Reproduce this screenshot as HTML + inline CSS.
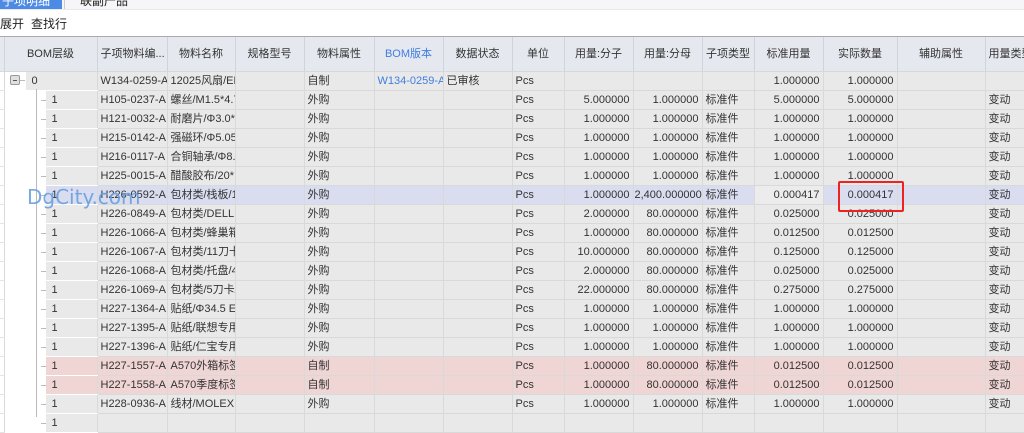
<!DOCTYPE html>
<html><head><meta charset="utf-8"><style>
*{margin:0;padding:0;box-sizing:border-box}
body{width:1024px;height:417px;overflow:hidden;background:#fff;font-family:"Liberation Sans","Noto Sans CJK SC",sans-serif;font-size:11px;color:#333;position:relative}
.tabbar{position:absolute;left:0;top:0;width:1024px;height:10px;background:#f6f6f8;border-bottom:1px solid #e8eaf0}
.tab1{position:absolute;left:0;top:-6px;width:62px;height:15px;background:#4d8ae6;color:#fff;font-size:12px;line-height:15px;padding-left:2px;overflow:hidden}
.tab2{position:absolute;left:80px;top:-6px;font-size:12px;line-height:15px;color:#222}
.sep{position:absolute;left:64px;top:0;width:1px;height:9px;background:#ccc}
.tb{position:absolute;top:15px;font-size:12px;color:#222}
.line{position:absolute;left:0;top:36px;width:1024px;height:1px;background:#aaa}
table{position:absolute;left:0;top:37px;border-collapse:collapse;table-layout:fixed;width:1064px}
td,th{height:19px;border-right:1px solid #d9d9d9;border-bottom:1px solid #d9d9d9;white-space:nowrap;overflow:hidden;padding:0 3px;font-weight:normal;line-height:18px}
th{height:34px;background:#e5e8ef;border-right:1px solid #cfd3dc;border-bottom:1px solid #d5d8df;color:#333;text-align:center}
td{background:#e9e9e9}
td.n{text-align:right}
td.lv{background:#fff;padding:0;position:relative;border-bottom-color:#fff}
td.lv:before{content:"";position:absolute;left:36px;top:9px;width:6px;height:1px;background:#bbb}
tr.r0 td.lv:before{display:none}
td.ind{background:#fff !important;border-bottom:1px solid #e4e4e4}
.g{position:absolute;top:0;bottom:-1px;right:0;background:#e9e9e9;padding-left:6px;border-bottom:1px solid #d9d9d9}
tr.hl td{background:#d9ddef}
tr.hl td.lv{background:#fff}
tr.hl td.lv .g{background:#d9ddef}
tr.pk td{background:#f0d5d5}
tr.pk td.lv{background:#fff}
tr.pk td.lv .g{background:#f0d5d5}
.blue{color:#3f7ee0}
.vl{position:absolute;left:36px;top:89px;width:1px;height:328px;background:#bbb}
.minus{position:absolute;left:10px;top:75px;width:10px;height:10px;border:1px solid #999;background:#e0e0e0;border-radius:2px}
.minus:after{content:"";position:absolute;left:2px;top:3.5px;width:4px;height:1px;background:#555}
.red{position:absolute;left:838px;top:181px;width:66px;height:31px;border:2px solid #e22;border-radius:2px}
.wm{position:absolute;left:27px;top:185px;font-size:20px;color:#6aa0dd;opacity:.9;font-family:"DejaVu Sans","Liberation Sans",sans-serif}
</style></head><body>
<div class="tabbar"><div class="tab1">子项明细</div><div class="sep"></div><div class="tab2">联副产品</div></div>
<div class="tb" style="left:0">展开</div><div class="tb" style="left:31px">查找行</div>
<div class="line"></div>
<table>
<colgroup><col style="width:4px"><col style="width:93px"><col style="width:70px"><col style="width:68px"><col style="width:69px"><col style="width:70px"><col style="width:69px"><col style="width:69px"><col style="width:52px"><col style="width:69px"><col style="width:69px"><col style="width:52px"><col style="width:69px"><col style="width:74px"><col style="width:88px"><col style="width:79px"></colgroup>
<tr><th style="background:#e5e8ef"></th><th>BOM层级</th><th>子项物料编...</th><th>物料名称</th><th>规格型号</th><th>物料属性</th><th class="blue">BOM版本</th><th>数据状态</th><th>单位</th><th>用量:分子</th><th>用量:分母</th><th>子项类型</th><th>标准用量</th><th>实际数量</th><th>辅助属性</th><th style="text-align:left">用量类型</th></tr>
<tr class="r0"><td class="ind"></td><td class="lv"><div class="g" style="left:21px">0</div></td><td>W134-0259-A</td><td>12025风扇/EF</td><td></td><td>自制</td><td class="blue">W134-0259-A</td><td>已审核</td><td>Pcs</td><td></td><td></td><td></td><td class="n">1.000000</td><td class="n">1.000000</td><td></td><td></td></tr>
<tr><td class="ind"></td><td class="lv"><div class="g" style="left:41px">1</div></td><td>H105-0237-A</td><td>螺丝/M1.5*4.7</td><td></td><td>外购</td><td></td><td></td><td>Pcs</td><td class="n">5.000000</td><td class="n">1.000000</td><td>标准件</td><td class="n">5.000000</td><td class="n">5.000000</td><td></td><td>变动</td></tr>
<tr><td class="ind"></td><td class="lv"><div class="g" style="left:41px">1</div></td><td>H121-0032-A</td><td>耐磨片/Φ3.0*0</td><td></td><td>外购</td><td></td><td></td><td>Pcs</td><td class="n">1.000000</td><td class="n">1.000000</td><td>标准件</td><td class="n">1.000000</td><td class="n">1.000000</td><td></td><td>变动</td></tr>
<tr><td class="ind"></td><td class="lv"><div class="g" style="left:41px">1</div></td><td>H215-0142-A</td><td>强磁环/Φ5.05</td><td></td><td>外购</td><td></td><td></td><td>Pcs</td><td class="n">1.000000</td><td class="n">1.000000</td><td>标准件</td><td class="n">1.000000</td><td class="n">1.000000</td><td></td><td>变动</td></tr>
<tr><td class="ind"></td><td class="lv"><div class="g" style="left:41px">1</div></td><td>H216-0117-A</td><td>合铜轴承/Φ8.0</td><td></td><td>外购</td><td></td><td></td><td>Pcs</td><td class="n">1.000000</td><td class="n">1.000000</td><td>标准件</td><td class="n">1.000000</td><td class="n">1.000000</td><td></td><td>变动</td></tr>
<tr><td class="ind"></td><td class="lv"><div class="g" style="left:41px">1</div></td><td>H225-0015-A</td><td>醋酸胶布/20*1</td><td></td><td>外购</td><td></td><td></td><td>Pcs</td><td class="n">1.000000</td><td class="n">1.000000</td><td>标准件</td><td class="n">1.000000</td><td class="n">1.000000</td><td></td><td>变动</td></tr>
<tr class="hl"><td class="ind"></td><td class="lv"><div class="g" style="left:41px">1</div></td><td>H226-0592-A</td><td>包材类/栈板/1</td><td></td><td>外购</td><td></td><td></td><td>Pcs</td><td class="n">1.000000</td><td class="n" style="text-align:left;padding:0 1px">2,400.000000</td><td>标准件</td><td class="n" style="background:#ececec">0.000417</td><td class="n">0.000417</td><td></td><td>变动</td></tr>
<tr><td class="ind"></td><td class="lv"><div class="g" style="left:41px">1</div></td><td>H226-0849-A</td><td>包材类/DELL I</td><td></td><td>外购</td><td></td><td></td><td>Pcs</td><td class="n">2.000000</td><td class="n">80.000000</td><td>标准件</td><td class="n">0.025000</td><td class="n">0.025000</td><td></td><td>变动</td></tr>
<tr><td class="ind"></td><td class="lv"><div class="g" style="left:41px">1</div></td><td>H226-1066-A</td><td>包材类/蜂巢箱</td><td></td><td>外购</td><td></td><td></td><td>Pcs</td><td class="n">1.000000</td><td class="n">80.000000</td><td>标准件</td><td class="n">0.012500</td><td class="n">0.012500</td><td></td><td>变动</td></tr>
<tr><td class="ind"></td><td class="lv"><div class="g" style="left:41px">1</div></td><td>H226-1067-A</td><td>包材类/11刀卡</td><td></td><td>外购</td><td></td><td></td><td>Pcs</td><td class="n">10.000000</td><td class="n">80.000000</td><td>标准件</td><td class="n">0.125000</td><td class="n">0.125000</td><td></td><td>变动</td></tr>
<tr><td class="ind"></td><td class="lv"><div class="g" style="left:41px">1</div></td><td>H226-1068-A</td><td>包材类/托盘/4</td><td></td><td>外购</td><td></td><td></td><td>Pcs</td><td class="n">2.000000</td><td class="n">80.000000</td><td>标准件</td><td class="n">0.025000</td><td class="n">0.025000</td><td></td><td>变动</td></tr>
<tr><td class="ind"></td><td class="lv"><div class="g" style="left:41px">1</div></td><td>H226-1069-A</td><td>包材类/5刀卡/</td><td></td><td>外购</td><td></td><td></td><td>Pcs</td><td class="n">22.000000</td><td class="n">80.000000</td><td>标准件</td><td class="n">0.275000</td><td class="n">0.275000</td><td></td><td>变动</td></tr>
<tr><td class="ind"></td><td class="lv"><div class="g" style="left:41px">1</div></td><td>H227-1364-A</td><td>贴纸/Φ34.5 E</td><td></td><td>外购</td><td></td><td></td><td>Pcs</td><td class="n">1.000000</td><td class="n">1.000000</td><td>标准件</td><td class="n">1.000000</td><td class="n">1.000000</td><td></td><td>变动</td></tr>
<tr><td class="ind"></td><td class="lv"><div class="g" style="left:41px">1</div></td><td>H227-1395-A</td><td>贴纸/联想专用</td><td></td><td>外购</td><td></td><td></td><td>Pcs</td><td class="n">1.000000</td><td class="n">1.000000</td><td>标准件</td><td class="n">1.000000</td><td class="n">1.000000</td><td></td><td>变动</td></tr>
<tr><td class="ind"></td><td class="lv"><div class="g" style="left:41px">1</div></td><td>H227-1396-A</td><td>贴纸/仁宝专用</td><td></td><td>外购</td><td></td><td></td><td>Pcs</td><td class="n">1.000000</td><td class="n">1.000000</td><td>标准件</td><td class="n">1.000000</td><td class="n">1.000000</td><td></td><td>变动</td></tr>
<tr class="pk"><td class="ind"></td><td class="lv"><div class="g" style="left:41px">1</div></td><td>H227-1557-A</td><td>A570外箱标签</td><td></td><td>自制</td><td></td><td></td><td>Pcs</td><td class="n">1.000000</td><td class="n">80.000000</td><td>标准件</td><td class="n">0.012500</td><td class="n">0.012500</td><td></td><td>变动</td></tr>
<tr class="pk"><td class="ind"></td><td class="lv"><div class="g" style="left:41px">1</div></td><td>H227-1558-A</td><td>A570季度标签</td><td></td><td>自制</td><td></td><td></td><td>Pcs</td><td class="n">1.000000</td><td class="n">80.000000</td><td>标准件</td><td class="n">0.012500</td><td class="n">0.012500</td><td></td><td>变动</td></tr>
<tr><td class="ind"></td><td class="lv"><div class="g" style="left:41px">1</div></td><td>H228-0936-A</td><td>线材/MOLEX</td><td></td><td>外购</td><td></td><td></td><td>Pcs</td><td class="n">1.000000</td><td class="n">1.000000</td><td>标准件</td><td class="n">1.000000</td><td class="n">1.000000</td><td></td><td>变动</td></tr>
<tr><td class="ind"></td><td class="lv"><div class="g" style="left:41px">1</div></td><td></td><td></td><td></td><td></td><td></td><td></td><td></td><td></td><td></td><td></td><td></td><td></td><td></td><td></td></tr>
</table>
<div class="vl"></div>
<div class="minus"></div>
<div style="position:absolute;left:20px;top:80px;width:5px;height:1px;background:#bbb"></div>
<div class="red"></div>
<div class="wm">DgCity.com</div>
</body></html>
